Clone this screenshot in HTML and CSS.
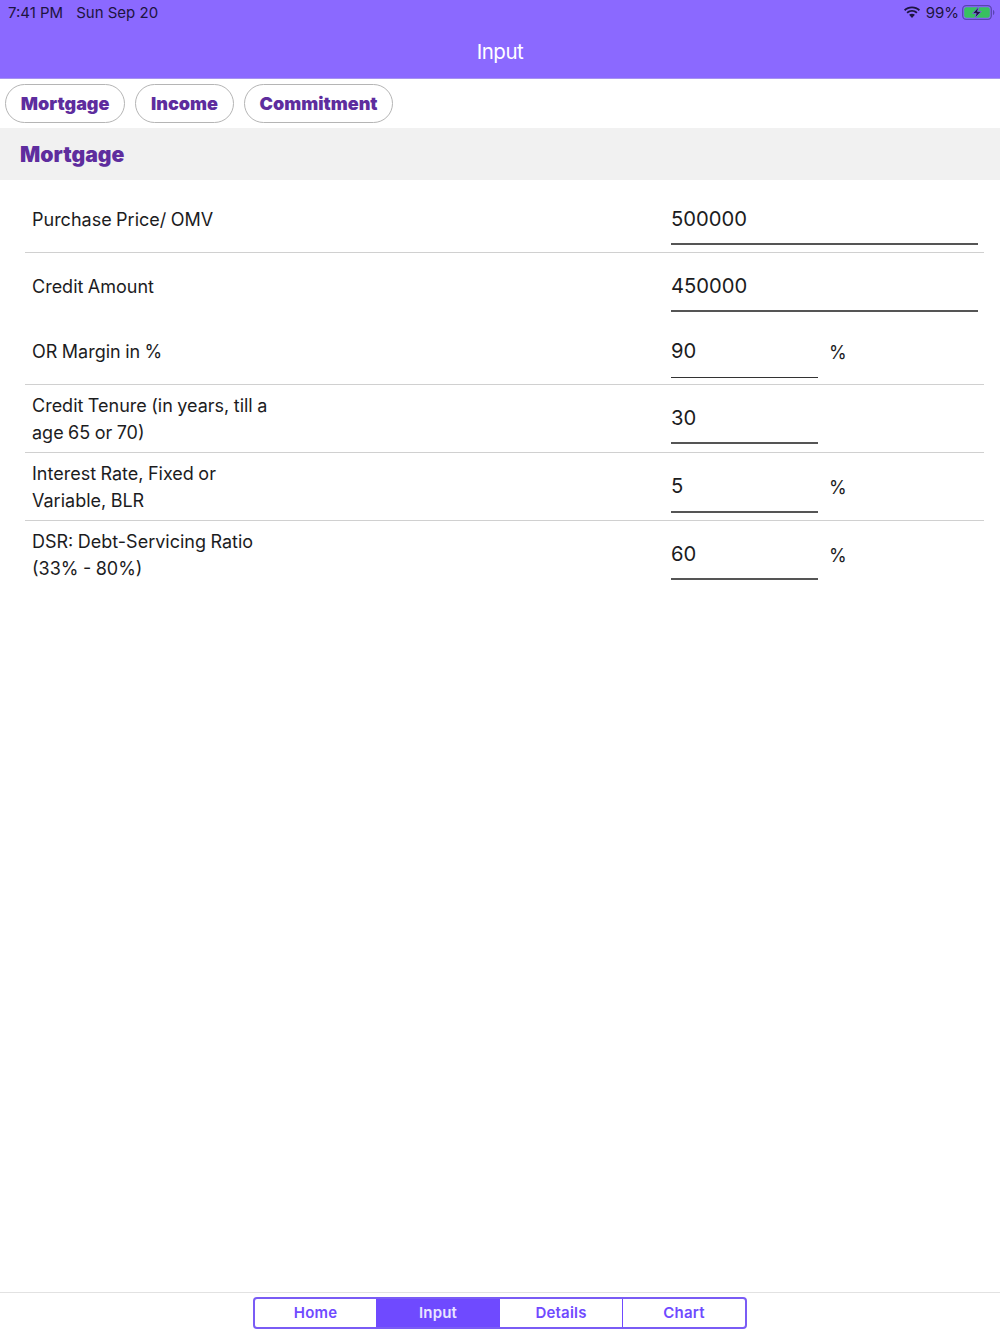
FILE: index.html
```html
<!DOCTYPE html>
<html lang="en">
  <head>
    <meta charset="UTF-8" />
    <meta name="viewport" content="width=device-width, initial-scale=1.0" />
    <title>Input</title>
    <link rel="stylesheet" href="styles.css">
  </head>
  <body>
    <div class="app">
      <header class="top-bar">
        <div class="status-bar">
          <div class="status-left">
            <span>7:41 PM</span>
            <span>Sun Sep 20</span>
          </div>
          <div class="status-right">
            <svg class="wifi" width="18" height="13" viewBox="0 0 18 13">
              <path d="M9 2.2c2.6 0 5 1 6.8 2.7l1.2-1.300C14.900 1.600 12.100.4 9 .4S3.100 1.600 1 3.600l1.200 1.300C4 3.200 6.400 2.200 9 2.200z" fill="#1d1440"/>
              <path d="M9 5.800c1.600 0 3.100.6 4.200 1.700l1.300-1.300C13 4.800 11.100 4 9 4s-4 .8-5.500 2.200l1.300 1.300C5.900 6.400 7.400 5.800 9 5.800z" fill="#1d1440"/>
              <path d="M9 7.700c-1.100 0-2.100.4-2.900 1.100L9 12l2.900-3.200C11.100 8.100 10.100 7.700 9 7.700z" fill="#1d1440"/>
            </svg>
            <span>99%</span>
            <svg class="battery" width="33" height="15" viewBox="0 0 33 15">
              <rect x="0.700" y="0.700" width="28.600" height="13.600" rx="3.500" fill="none" stroke="#5a44b0" stroke-width="1.300"/>
              <rect x="2.200" y="2.200" width="25.600" height="10.600" rx="2" fill="#38c060"/>
              <path d="M31 5v5c.9-.3 1.400-1.400 1.400-2.500S31.900 5.300 31 5z" fill="#5a44b0"/>
              <path d="M16.800 1.800 10.500 8.400h3.700l-1.300 4.800 6.400-6.800h-3.800z" fill="#1d1440" stroke="#8b69ff" stroke-width="0.700"/>
            </svg>
          </div>
        </div>
        <div class="title">Input</div>
      </header>

      <nav class="pills">
        <a class="pill">Mortgage</a>
        <a class="pill">Income</a>
        <a class="pill">Commitment</a>
      </nav>

      <h2 class="section-title">Mortgage</h2>

      <main class="form">
        <div class="row row-1 line">
          <div class="label label-single">Purchase Price/ OMV</div>
          <div class="field field-wide">500000</div>
        </div>
        <div class="row row-2">
          <div class="label label-single">Credit Amount</div>
          <div class="field field-wide">450000</div>
        </div>
        <div class="row row-3 line">
          <div class="label label-short">OR Margin in %</div>
          <div class="field thin">90</div>
          <div class="unit">%</div>
        </div>
        <div class="row row-4 line">
          <div class="label">Credit Tenure (in years, till a<br>age 65 or 70)</div>
          <div class="field">30</div>
        </div>
        <div class="row row-4 line">
          <div class="label">Interest Rate, Fixed or<br>Variable, BLR</div>
          <div class="field field-tall">5</div>
          <div class="unit">%</div>
        </div>
        <div class="row row-4">
          <div class="label">DSR: Debt-Servicing Ratio<br>(33% - 80%)</div>
          <div class="field">60</div>
          <div class="unit">%</div>
        </div>
      </main>

      <footer class="bottom-bar">
        <div class="segments">
          <a class="segment">Home</a>
          <a class="segment active">Input</a>
          <a class="segment">Details</a>
          <a class="segment">Chart</a>
        </div>
      </footer>
    </div>
  </body>
</html>
```

FILE: styles.css
```css
* {
  box-sizing: border-box;
}
body {
  margin: 0;
  font-family: Inter, "Liberation Sans", sans-serif;
  background-color: #fff;
  color: #1c1c1e;
}
.app {
  display: flex;
  flex-direction: column;
  height: 1334px;
}
.top-bar {
  height: 79px;
  background-color: #8b69ff;
  border-bottom: 1px solid #a794f0;
}
.status-bar {
  height: 24px;
  padding: 0 5px 0 8px;
  display: flex;
  justify-content: space-between;
  align-items: center;
  font-size: 15px;
  color: #1d1440;
}
.status-left {
  display: flex;
  gap: 13px;
}
.status-right {
  display: flex;
  align-items: center;
  gap: 5px;
}
.battery {
  margin-left: -2px;
}
.title {
  height: 48px;
  margin-top: 4px;
  text-align: center;
  font-size: 20.500px;
  line-height: 48px;
  letter-spacing: -0.5px;
  color: #fff;
}
.pills {
  height: 49px;
  padding: 5px 0 0 5px;
  display: flex;
  align-items: flex-start;
  gap: 10px;
}
.pill {
  height: 39px;
  padding: 0 14.800px;
  border: 1.500px solid #b5b5b5;
  border-radius: 20px;
  font-size: 18px;
  font-weight: 900;
  line-height: 38px;
  color: #5e2d9e;
}
.section-title {
  margin: 0;
  height: 52px;
  padding-left: 20px;
  background-color: #f1f1f1;
  font-size: 21.200px;
  font-weight: 900;
  line-height: 53px;
  color: #5e2d9e;
}
.form {
  flex: 1;
  padding: 6px 16px 0 25px;
}
.row {
  display: grid;
  grid-template-columns: 646px 147px 1fr;
  align-items: start;
  font-size: 18px;
  word-spacing: -0.6px;
}
.row-1 {
  height: 67px;
}
.row-2 {
  height: 66px;
}
.row-3 {
  height: 66px;
}
.row-4 {
  height: 68px;
}
.line {
  border-bottom: 1.500px solid #d0d0d0;
}
.label {
  padding: 7px 0 0 7px;
  line-height: 27px;
}
.label-single {
  padding-top: 20.250px;
}
.label-short {
  padding-top: 19px;
}
.field {
  height: 59px;
  padding-top: 15.500px;
  font-size: 20.200px;
  line-height: 34px;
  border-bottom: 2px solid #555;
}
.field.thin {
  padding-top: 14.500px;
  border-bottom: 1px solid #333;
}
.field-wide {
  grid-column: 2 / 4;
  margin-right: 6px;
}
.field-tall {
  height: 60px;
}
.unit {
  padding-left: 11px;
  line-height: 69px;
}
.row-3 .unit {
  line-height: 67px;
}
.bottom-bar {
  height: 42px;
  border-top: 1px solid #e2e2e2;
  display: flex;
  justify-content: center;
  padding-top: 4px;
}
.segments {
  width: 494px;
  height: 32px;
  display: grid;
  grid-template-columns: 121px 123px 123px 1fr;
  border: 2px solid #7a5cf5;
  border-radius: 4px;
  overflow: hidden;
}
.segment {
  text-align: center;
  font-size: 15px;
  font-weight: 600;
  line-height: 28px;
  letter-spacing: 0.2px;
  color: #6f4aff;
  border-left: 1.500px solid #6f4aff;
}
.segment:first-child {
  border-left: none;
}
.segment.active {
  background-color: #6f4aff;
  color: #e9e4ff;
}
```
